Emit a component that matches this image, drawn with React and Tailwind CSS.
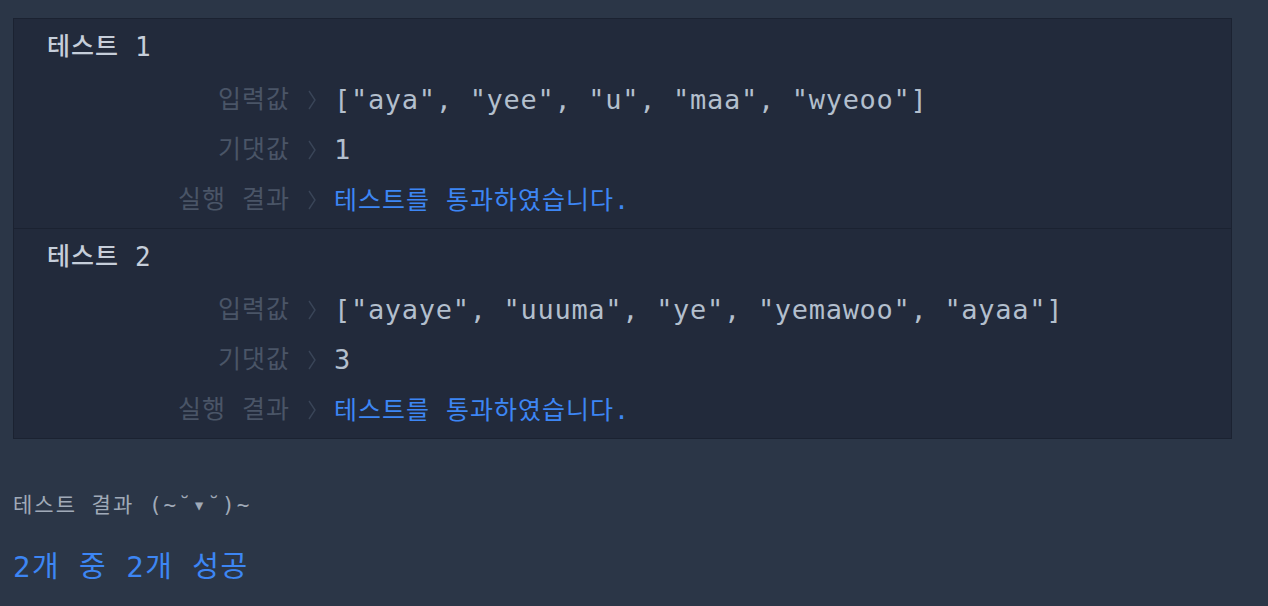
import React from 'react';

const mono = { fontFamily: '"DejaVu Sans Mono", "Noto Sans CJK KR", monospace' };

const tests = [
  { num: '1', input: '["aya", "yee", "u", "maa", "wyeoo"]', expected: '1' },
  { num: '2', input: '["ayaye", "uuuma", "ye", "yemawoo", "ayaa"]', expected: '3' },
];

const Chevron = () => (
  <svg width="10" height="22" viewBox="0 0 10 22" fill="none">
    <polyline points="2,2 8,11 2,20" stroke="#3a4558" strokeWidth="1.4" />
  </svg>
);

const Row = ({ label, children }) => (
  <div className="flex items-center h-[50px]">
    <div className="w-[276px] text-right text-[25px] text-[#4a5567] tracking-[1px]">{label}</div>
    <div className="w-[44px] flex justify-center">
      <Chevron />
    </div>
    <div className="text-[27px] tracking-[0.7px]">{children}</div>
  </div>
);

const TestCase = ({ test, last }) => (
  <div className={`pb-[3px] ${last ? '' : 'border-b border-[#1b2231]'}`}>
    <div className="h-[56px] flex items-center pl-[33px] text-[#c6ceda]">
      <span className="text-[25px] tracking-[1px] font-medium">테스트</span>
      <span className="ml-[16px] text-[26px]">{test.num}</span>
    </div>
    <Row label="입력값">
      <span className="text-[#b3bfcd]">{test.input}</span>
    </Row>
    <Row label="기댓값">
      <span className="text-[#b3bfcd]">{test.expected}</span>
    </Row>
    <Row label="실행 결과">
      <span className="text-[#3d86f4] text-[25px] tracking-[1px]">테스트를 통과하였습니다.</span>
    </Row>
  </div>
);

export default function App() {
  return (
    <div className="min-h-[606px] bg-[#2b3647] pt-[18px] pl-[13px]" style={mono}>
      <div className="w-[1219px] bg-[#222a3b] border border-[#1b2231]">
        {tests.map((t, i) => (
          <TestCase key={i} test={t} last={i === tests.length - 1} />
        ))}
      </div>
      <div className="mt-[52px] text-[21px] text-[#a0aab8] leading-[28px] tracking-[2px]">테스트 결과 (~˘▾˘)~</div>
      <div className="mt-[30px] text-[29px] text-[#3d86f4] leading-[36px] tracking-[1.5px]">2개 중 2개 성공</div>
    </div>
  );
}
